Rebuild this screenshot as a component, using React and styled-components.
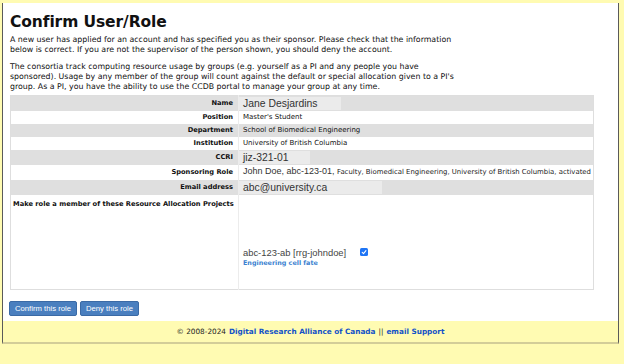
import React from 'react';
import styled, { createGlobalStyle } from 'styled-components';

const Global = createGlobalStyle`
  html, body {
    margin: 0;
    padding: 0;
    background: #fffbb2;
  }
  body {
    font-family: "DejaVu Sans", Verdana, sans-serif;
    color: #111;
  }
`;

const Page = styled.div`
  margin: 3px 0 0 2px;
  width: 615px;
  border-left: 1px solid #5a5a5a;
  border-right: 1px solid #5a5a5a;
  border-bottom: 2px solid #d3cd98;
`;

const Content = styled.div`
  background: #fff;
  padding: 9px 24px 5px 7px;
`;

const Title = styled.h1`
  margin: 0 0 3px 0;
  font-size: 15.5px;
  line-height: 20px;
  font-weight: bold;
  letter-spacing: -0.1px;
`;

const Para = styled.p`
  margin: 0;
  font-size: 7.85px;
  line-height: 10px;
  white-space: nowrap;

  & + & {
    margin-top: 7px;
  }
`;

const Table = styled.table`
  width: 584px;
  border-collapse: collapse;
  margin: 3px 0 11px 0;
  border: 1px solid #dedede;
`;

const Row = styled.tr`
  background: ${p => (p.$shade ? '#dfdfdf' : '#fff')};
  height: ${p => p.$h}px;
`;

const Label = styled.th`
  width: 225px;
  padding: 0 5px 0 0;
  text-align: right;
  font-size: 6.7px;
  font-weight: bold;
  border-right: 1px solid #ececec;
  vertical-align: middle;
`;

const TopLabel = styled(Label)`
  text-align: left;
  vertical-align: top;
  padding: 5px 0 0 2px;
`;

const Value = styled.td`
  padding: 0 0 0 4px;
  font-size: 7px;
  vertical-align: middle;
`;

const Field = styled.span`
  display: inline-block;
  width: ${p => p.$w}px;
  margin-left: -4px;
  padding-left: 4px;
  background: ${p => (p.$plain ? 'transparent' : '#ebebeb')};
  font-family: "Liberation Sans", Arial, sans-serif;
  font-size: ${p => p.$size || 10.4}px;
  line-height: 13px;
  color: #333;
`;

const Small = styled.span`
  font-family: "DejaVu Sans", Verdana, sans-serif;
  font-size: 6.9px;
  color: #222;
`;

const ProjectCell = styled.td`
  padding: 52px 0 14px 4px;
  vertical-align: top;
`;

const Project = styled.div`
  display: flex;
  align-items: center;
  gap: 14px;
  font-family: "Liberation Sans", Arial, sans-serif;
  font-size: 9.4px;
  line-height: 11px;
  color: #444;
`;

const Check = styled.span`
  width: 8px;
  height: 8px;
  border-radius: 1.5px;
  background: #1f75f5;
  display: inline-flex;
  align-items: center;
  justify-content: center;
`;

const ProjectName = styled.div`
  margin-top: 1px;
  font-size: 6.4px;
  font-weight: bold;
  color: #3a7fd0;
`;

const Buttons = styled.div`
  display: flex;
  gap: 3px;
  margin-left: -1px;
`;

const Button = styled.button`
  height: 15px;
  padding: 0 5px;
  border: 1px solid #3b6aa5;
  border-radius: 2px;
  background: #4a7fbf;
  color: #fff;
  font-family: "Liberation Sans", Arial, sans-serif;
  font-size: 7.7px;
  cursor: pointer;
`;

const Footer = styled.div`
  height: 21px;
  display: flex;
  align-items: center;
  justify-content: center;
  font-size: 7.3px;
  color: #222;
  gap: 3px;
`;

const Link = styled.a`
  color: #1352c8;
  font-weight: bold;
  text-decoration: none;
`;

export default function App() {
  return (
    <>
      <Global />
      <Page>
        <Content>
          <Title>Confirm User/Role</Title>
          <Para>
            A new user has applied for an account and has specified you as their sponsor. Please check that the information
            <br />
            below is correct. If you are not the supervisor of the person shown, you should deny the account.
          </Para>
          <Para>
            The consortia track computing resource usage by groups (e.g. yourself as a PI and any people you have
            <br />
            sponsored). Usage by any member of the group will count against the default or special allocation given to a PI's
            <br />
            group. As a PI, you have the ability to use the CCDB portal to manage your group at any time.
          </Para>
          <Table>
            <tbody>
              <Row $shade $h={15}>
                <Label>Name</Label>
                <Value><Field $w={98}>Jane Desjardins</Field></Value>
              </Row>
              <Row $h={13}>
                <Label>Position</Label>
                <Value>Master's Student</Value>
              </Row>
              <Row $shade $h={13}>
                <Label>Department</Label>
                <Value>School of Biomedical Engineering</Value>
              </Row>
              <Row $h={13}>
                <Label>Institution</Label>
                <Value>University of British Columbia</Value>
              </Row>
              <Row $shade $h={15}>
                <Label>CCRI</Label>
                <Value><Field $w={67}>jiz-321-01</Field></Value>
              </Row>
              <Row $h={15}>
                <Label>Sponsoring Role</Label>
                <Value>
                  <Field $plain $w={350} $size={9}>
                    John Doe, abc-123-01, <Small>Faculty, Biomedical Engineering, University of British Columbia, activated</Small>
                  </Field>
                </Value>
              </Row>
              <Row $shade $h={15}>
                <Label>Email address</Label>
                <Value><Field $w={139}>abc@university.ca</Field></Value>
              </Row>
              <Row $h={95}>
                <TopLabel>Make role a member of these Resource Allocation Projects</TopLabel>
                <ProjectCell>
                  <Project>
                    abc-123-ab [rrg-johndoe]
                    <Check>
                      <svg width="6" height="6" viewBox="0 0 10 10">
                        <path d="M2 5.5 L4.2 7.6 L8.2 2.6" fill="none" stroke="#fff" strokeWidth="1.8" strokeLinecap="round" strokeLinejoin="round" />
                      </svg>
                    </Check>
                  </Project>
                  <ProjectName>Engineering cell fate</ProjectName>
                </ProjectCell>
              </Row>
            </tbody>
          </Table>
          <Buttons>
            <Button type="button">Confirm this role</Button>
            <Button type="button">Deny this role</Button>
          </Buttons>
        </Content>
        <Footer>
          <span>© 2008-2024</span>
          <Link href="#">Digital Research Alliance of Canada</Link>
          <span>||</span>
          <Link href="#">email Support</Link>
        </Footer>
      </Page>
    </>
  );
}
